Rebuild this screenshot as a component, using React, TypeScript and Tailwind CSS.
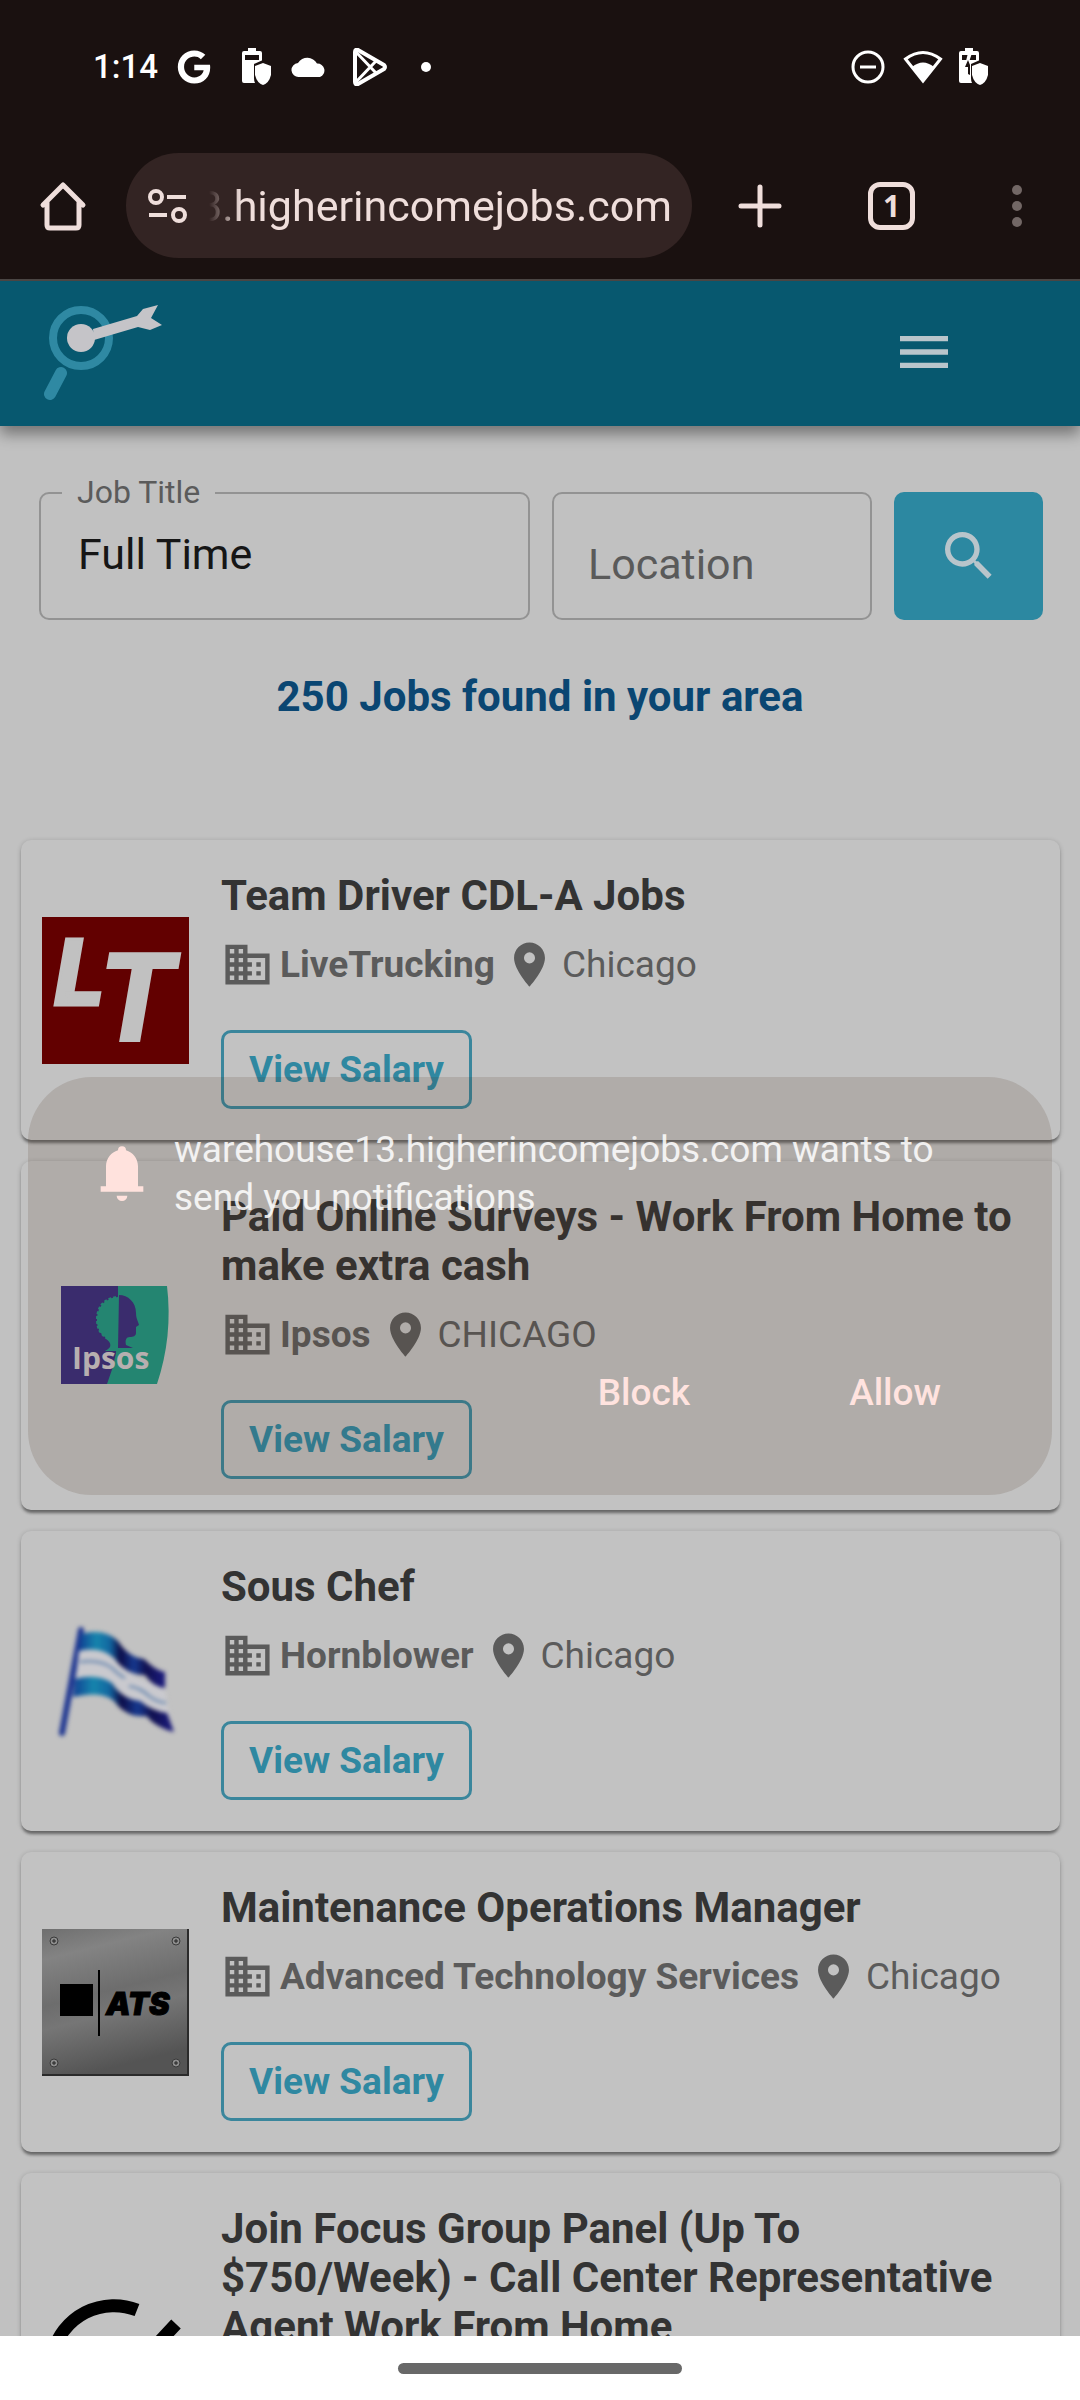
import React from "react";
import { MdBusiness, MdPlace, MdSearch, MdMenu } from "react-icons/md";
import { FaGoogle } from "react-icons/fa";

function BatteryShield({ charging = false }: { charging?: boolean }) {
  return (
    <svg viewBox="0 0 32 38" className="h-[38px] w-8" aria-hidden="true">
      <path fill="#fff" d="M7 0h8v3h4q2 0 2 2v9q-5 2-8 4v12q0 3 1 5H3q-2 0-2-2V5q0-2 2-2h4z" />
      <path fill="#1a1110" d="M4 7h14v5H4z" />
      {charging && <path fill="#fff" d="M10 5h4l-3 9-3-1z" />}
      {charging && <path fill="#1a1110" d="M10 12l2 5v10l-2-1v-7H7z" />}
      <path fill="#1a1110" d="M22 12l11 4v12q-4 8-11 10-7-2-9-10V16z" />
      <path fill="#fff" d="M22 15l8 3v9q-2 8-8 10-6-2-8-10v-9z" />
    </svg>
  );
}

function StatusBar() {
  return (
    <div className="flex h-[134px] items-center pl-[93px] pr-[90px] text-white">
      <span className="w-[84px] text-[33px] font-medium leading-[40px]">1:14</span>
      <FaGoogle className="size-[34px]" aria-hidden="true" />
      <span className="ml-[30px] flex">
        <BatteryShield />
      </span>
      <svg viewBox="0 0 36 22" className="ml-[18px] h-[22px] w-9" aria-hidden="true">
        <path fill="#fff" d="M8 21a7 7 0 0 1-1-14A11 11 0 0 1 26 7.500A7 7 0 0 1 29 21z" />
      </svg>
      <svg viewBox="0 0 36 38" className="ml-[25px] h-[38px] w-9" fill="none" stroke="#fff" strokeWidth="4" strokeLinejoin="round" aria-hidden="true">
        <path d="M3 4v30q0 3 3 2l26-15q2-2 0-4L6 2Q3 1 3 4z" />
        <path strokeWidth="3" d="M4 4l20 21M4 34l20-21" />
      </svg>
      <span className="ml-[33px] size-[10px] rounded-full bg-white" />
      <div className="ml-auto flex items-center">
        <svg viewBox="0 0 34 34" className="size-[34px]" fill="none" stroke="#fff" strokeWidth="3" aria-hidden="true">
          <circle cx="17" cy="17" r="15" />
          <path d="M9 17h16" />
        </svg>
        <svg viewBox="0 0 40 34" className="ml-[18px] h-[34px] w-10" aria-hidden="true">
          <path d="M2.500 9Q20-4 37.500 9L20 31z" fill="none" stroke="#fff" strokeWidth="3" />
          <path d="M9 17Q20 8 31 17L20 32z" fill="#fff" />
        </svg>
        <span className="ml-[15px] flex">
          <BatteryShield charging />
        </span>
      </div>
    </div>
  );
}

function BrowserBar() {
  return (
    <div className="flex h-[145px] items-center pb-[2px] pl-[39px] pr-[58px] text-[#efdedb]">
      <button aria-label="Home">
        <svg viewBox="0 0 48 50" className="h-[50px] w-12" fill="none" stroke="currentColor" strokeWidth="5" strokeLinecap="round" strokeLinejoin="round" aria-hidden="true">
          <path d="M4 24L24 4l20 20M8 21v23q0 3 3 3h26q3 0 3-3V21" />
        </svg>
      </button>
      <div className="ml-[39px] flex h-[105px] min-w-0 flex-1 items-center rounded-full bg-[#332423] pl-[21px] pr-[20px]">
        <button aria-label="Site settings">
          <svg viewBox="0 0 40 36" className="h-9 w-10" fill="none" stroke="currentColor" strokeWidth="4" aria-hidden="true">
            <circle cx="9" cy="9" r="6" />
            <circle cx="32" cy="27" r="6" />
            <path d="M20 9h19M2 27h18" />
          </svg>
        </button>
        <div className="ml-[22px] flex min-w-0 flex-1 justify-end overflow-hidden whitespace-nowrap [mask-image:linear-gradient(to_right,transparent,black_32px)]">
          <span className="text-[43px] leading-[56px]">3.higherincomejobs.com</span>
        </div>
      </div>
      <button aria-label="New tab" className="ml-[46px]">
        <svg viewBox="0 0 44 44" className="size-11" fill="none" stroke="currentColor" strokeWidth="5" strokeLinecap="round" aria-hidden="true">
          <path d="M22 3v38M3 22h38" />
        </svg>
      </button>
      <button aria-label="Open tabs" className="ml-[86px] flex h-12 w-[47px] items-center justify-center rounded-[12px] border-[5px] border-[#efdedb] font-['Open_Sans'] text-[30px] font-bold leading-none">
        1
      </button>
      <button aria-label="More" className="ml-[97px] flex flex-col gap-[6px]">
        <span className="size-[10px] rounded-full bg-[#726765]" />
        <span className="size-[10px] rounded-full bg-[#726765]" />
        <span className="size-[10px] rounded-full bg-[#726765]" />
      </button>
    </div>
  );
}

function SiteHeader() {
  return (
    <header className="relative z-10 flex h-[145px] items-center justify-between bg-[#07586f] pb-[3px] pl-[42px] pr-[124px] shadow-[0_8px_14px_rgba(0,0,0,0.4)]">
      <a href="#" aria-label="Higher Income Jobs">
        <svg viewBox="0 0 122 98" className="h-[98px] w-[122px]" aria-hidden="true">
          <circle cx="39" cy="35" r="28" fill="none" stroke="#2f89a3" strokeWidth="8" />
          <path d="M19 70L8 91" stroke="#2f89a3" strokeWidth="12" strokeLinecap="round" />
          <path fill="#c5c4c8" d="M51 26L95 13l6-7 15-4-7 13 11 7-12 5-12-3-44 13z" />
          <circle cx="39" cy="35" r="14" fill="#c5c4c8" />
        </svg>
      </a>
      <button aria-label="Menu">
        <MdMenu className="size-16 text-[#b9c5cb]" />
      </button>
    </header>
  );
}

function SearchForm() {
  return (
    <form className="grid grid-cols-12 gap-[22px] pl-[39px] pr-[37px] pt-[66px]" onSubmit={(e) => e.preventDefault()}>
      <div className="relative col-span-6">
        <label htmlFor="title" className="absolute -top-[19px] left-[23px] bg-[#c1c1c1] px-[15px] text-[32px] leading-[38px] text-[#5b5b5b]">
          Job Title
        </label>
        <input id="title" defaultValue="Full Time" className="h-32 w-full rounded-[10px] border-2 border-[#939393] pb-[4px] pl-[37px] text-[43px] text-[#161616] outline-none" />
      </div>
      <input aria-label="Location" placeholder="Location" className="col-span-4 h-32 w-full min-w-0 rounded-[10px] border-2 border-[#939393] pl-[34px] pt-[16px] text-[43px] outline-none placeholder:text-[#5a5a5a]" />
      <button aria-label="Search" className="col-span-2 flex h-32 items-center justify-center rounded-[10px] bg-[#2c88a1]">
        <MdSearch className="size-16 text-[#b9c5cb]" />
      </button>
    </form>
  );
}

function LiveTruckingLogo() {
  return (
    <svg viewBox="0 0 147 147" className="size-[147px]" role="img" aria-label="LiveTrucking">
      <rect width="147" height="147" fill="#620000" />
      <g fill="#c1c1c1" fontFamily="Roboto" fontWeight="900" fontStyle="italic">
        <text x="13" y="88" fontSize="93" stroke="#c1c1c1" strokeWidth="3">L</text>
        <text x="56" y="125" fontSize="125">T</text>
      </g>
    </svg>
  );
}

function IpsosLogo() {
  return (
    <svg viewBox="0 0 147 147" className="size-[147px]" role="img" aria-label="Ipsos">
      <path fill="#382c7c" d="M19 24h60v98H19z" />
      <path fill="#1e9580" d="M76 24h49q6 50-10 98H65q12-30 11-60z" />
      <path fill="#1e9580" d="M77 34c-14 0-23 9-23 24 0 9 4 15 10 19 4 3 5 5 4 8-1 2-4 3-5 4h14z" />
      <path d="M76 34c-13 1-22 10-22 24 0 9 4 15 10 19" fill="none" stroke="#382c7c" strokeWidth="2" strokeDasharray="2 3" />
      <path fill="#382c7c" d="M77 33c9 0 17 7 17 18 0 6 3 10 3 12l-3 2v6c0 3-3 4-6 4-4 0-5 3-4 8l7 3H76z" />
      <text x="30" y="107" fontSize="30" fontFamily="Open Sans" fontWeight="700" fill="#cbc6cb">Ipsos</text>
    </svg>
  );
}

function HornblowerLogo() {
  return (
    <svg viewBox="0 0 147 147" className="size-[147px] blur-[2px]" role="img" aria-label="Hornblower">
      <defs>
        <linearGradient id="flag" x1="0" x2="1">
          <stop offset="0" stopColor="#103f92" />
          <stop offset="0.2" stopColor="#1685ad" />
          <stop offset="0.36" stopColor="#1267a0" />
          <stop offset="0.48" stopColor="#0d0c48" />
          <stop offset="0.64" stopColor="#16398f" />
          <stop offset="0.78" stopColor="#10104f" />
          <stop offset="1" stopColor="#1b1b80" />
        </linearGradient>
      </defs>
      <path d="M39 22L20 125" stroke="#1c3490" strokeWidth="6" strokeLinecap="round" />
      <path fill="#c9c9ce" d="M37 42q22-6 36 8 12 16 28 22 12 4 22 10l5 28q-12-9-26-10-20-6-30-18-14-10-39-4z" />
      <path fill="url(#flag)" d="M39 26q23-6 37 7 10 16 26 18 12 12 21 13v16q-12-1-20-13-19 0-31-17-14-12-35-7z" />
      <path fill="url(#flag)" d="M33 71q22-6 37 4 10 16 28 18 12 10 27 12l7 19q-17-4-28-16-16 2-28-10-10-17-45-9z" />
      <path d="M38 54q20-3 32 6 8 8 13 10M87 78q12 2 20 10 8 6 17 7" fill="none" stroke="#577ba9" strokeWidth="2" />
    </svg>
  );
}

function AtsLogo() {
  return (
    <svg viewBox="0 0 147 147" className="size-[147px]" role="img" aria-label="ATS">
      <defs>
        <linearGradient id="metal" x1="0" y1="0" x2="0.25" y2="1">
          <stop offset="0" stopColor="#6f6f6f" />
          <stop offset="0.2" stopColor="#838383" />
          <stop offset="0.5" stopColor="#6d6d6d" />
          <stop offset="0.65" stopColor="#767676" />
          <stop offset="1" stopColor="#545454" />
        </linearGradient>
      </defs>
      <rect width="147" height="147" fill="url(#metal)" />
      <path d="M0 146h146V0" fill="none" stroke="#2b2b2b" strokeWidth="2" />
      <path fill="#000" d="M18 55h33v32H18zM56 41h2v66h-2z" />
      <text x="64" y="86" fontSize="31" fontFamily="Inter" fontWeight="900" fontStyle="italic" stroke="#000" strokeWidth="1">ATS</text>
      {[12, 134].map((x) =>
        [12, 134].map((y) => (
          <g key={`${x}-${y}`}>
            <circle cx={x} cy={y} r="4" fill="#8d8d8d" stroke="#3a3a3a" strokeWidth="1" />
            <path d={`M${x - 2} ${y}h4M${x} ${y - 2}v4`} stroke="#222" />
          </g>
        )),
      )}
    </svg>
  );
}

function FocusGroupLogo() {
  return (
    <svg viewBox="0 0 147 147" className="size-[147px]" role="img" aria-label="Focus group">
      <g fill="none" stroke="#000" strokeWidth="13">
        <path d="M95 11A63 63 0 1 0 135 70" />
        <path d="M40 72l24 28 70-75" />
      </g>
    </svg>
  );
}

type Job = { title: string; company: string; place: string; logo: React.ReactNode };

const jobs: Job[] = [
  { title: "Team Driver CDL-A Jobs", company: "LiveTrucking", place: "Chicago", logo: <LiveTruckingLogo /> },
  { title: "Paid Online Surveys - Work From Home to make extra cash", company: "Ipsos", place: "CHICAGO", logo: <IpsosLogo /> },
  { title: "Sous Chef", company: "Hornblower", place: "Chicago", logo: <HornblowerLogo /> },
  { title: "Maintenance Operations Manager", company: "Advanced Technology Services", place: "Chicago", logo: <AtsLogo /> },
  { title: "Join Focus Group Panel (Up To $750/Week) - Call Center Representative Agent Work From Home", company: "Focus Group", place: "Chicago", logo: <FocusGroupLogo /> },
];

function JobCard({ title, company, place, logo }: Job) {
  return (
    <li className="flex items-center rounded-[10px] bg-[#c2c2c2] pl-[21px] pr-[32px] shadow-[0_4px_3px_-1px_rgba(0,0,0,0.4),0_1px_5px_rgba(0,0,0,0.2)]">
      <div className="shrink-0">{logo}</div>
      <div className="ml-8 flex min-w-0 flex-1 flex-col items-start pb-[31px] pt-[31px]">
        <h2 className="text-[42px] font-bold leading-[49px] text-[#333333]">{title}</h2>
        <p className="mt-[18px] flex h-[53px] items-center whitespace-nowrap text-[37px] leading-[53px] text-[#5b5b5b]">
          <MdBusiness className="size-[53px]" />
          <span className="ml-[6px] font-bold">{company}</span>
          <MdPlace className="ml-2 size-[53px]" />
          <span className="ml-[6px]">{place}</span>
        </p>
        <button className="mt-[39px] h-[79px] rounded-[10px] border-[3px] border-[#3a869c] px-[25px] text-[37px] font-bold text-[#2f88a1]">
          View Salary
        </button>
      </div>
    </li>
  );
}

function NotificationPrompt() {
  return (
    <div role="dialog" aria-labelledby="prompt" className="absolute inset-x-[28px] top-[796px] z-20 flex h-[418px] flex-col rounded-[64px] bg-[#4a2c1a]/15 pl-[62px] pt-[49px]">
      <div className="flex items-start pr-[90px]">
        <svg viewBox="0 0 24 24" className="mt-[15px] size-16 shrink-0" fill="#ffe2dd" aria-hidden="true">
          <path d="M10 20.500h4a2 2 0 0 1-4 0zM4 17h2V9.500C6 6.600 8 4.200 10.500 3.500a1.500 1.500 0 0 1 3 0C16 4.200 18 6.600 18 9.500V17h2v2H4z" />
        </svg>
        <p id="prompt" className="ml-[20px] text-[37px] leading-[48px] text-white/85">
          warehouse13.higherincomejobs.com wants to send you notifications
        </p>
      </div>
      <div className="mt-[147px] flex justify-end gap-[159px] pr-[111px] text-[37px] font-medium leading-[48px] text-[#ffe3df]">
        <button>Block</button>
        <button>Allow</button>
      </div>
    </div>
  );
}

export default function App() {
  return (
    <div className="flex h-screen flex-col overflow-hidden bg-[#1a1110] font-['Roboto',sans-serif]">
      <StatusBar />
      <BrowserBar />
      <main className="relative min-h-0 flex-1 overflow-hidden border-t-2 border-[#4a4543] bg-[#c1c1c1]">
        <SiteHeader />
        <SearchForm />
        <h1 className="mt-[53px] text-center text-[42px] font-bold leading-[48px] text-[#0a4672]">250 Jobs found in your area</h1>
        <ul className="mt-[119px] flex flex-col gap-[21px] pl-[21px] pr-[20px]">
          {jobs.map((job) => (
            <JobCard key={job.title} {...job} />
          ))}
        </ul>
        <NotificationPrompt />
      </main>
      <div className="flex h-16 shrink-0 items-center justify-center bg-white">
        <span className="h-[11px] w-[284px] rounded-full bg-[#686868]" />
      </div>
    </div>
  );
}
